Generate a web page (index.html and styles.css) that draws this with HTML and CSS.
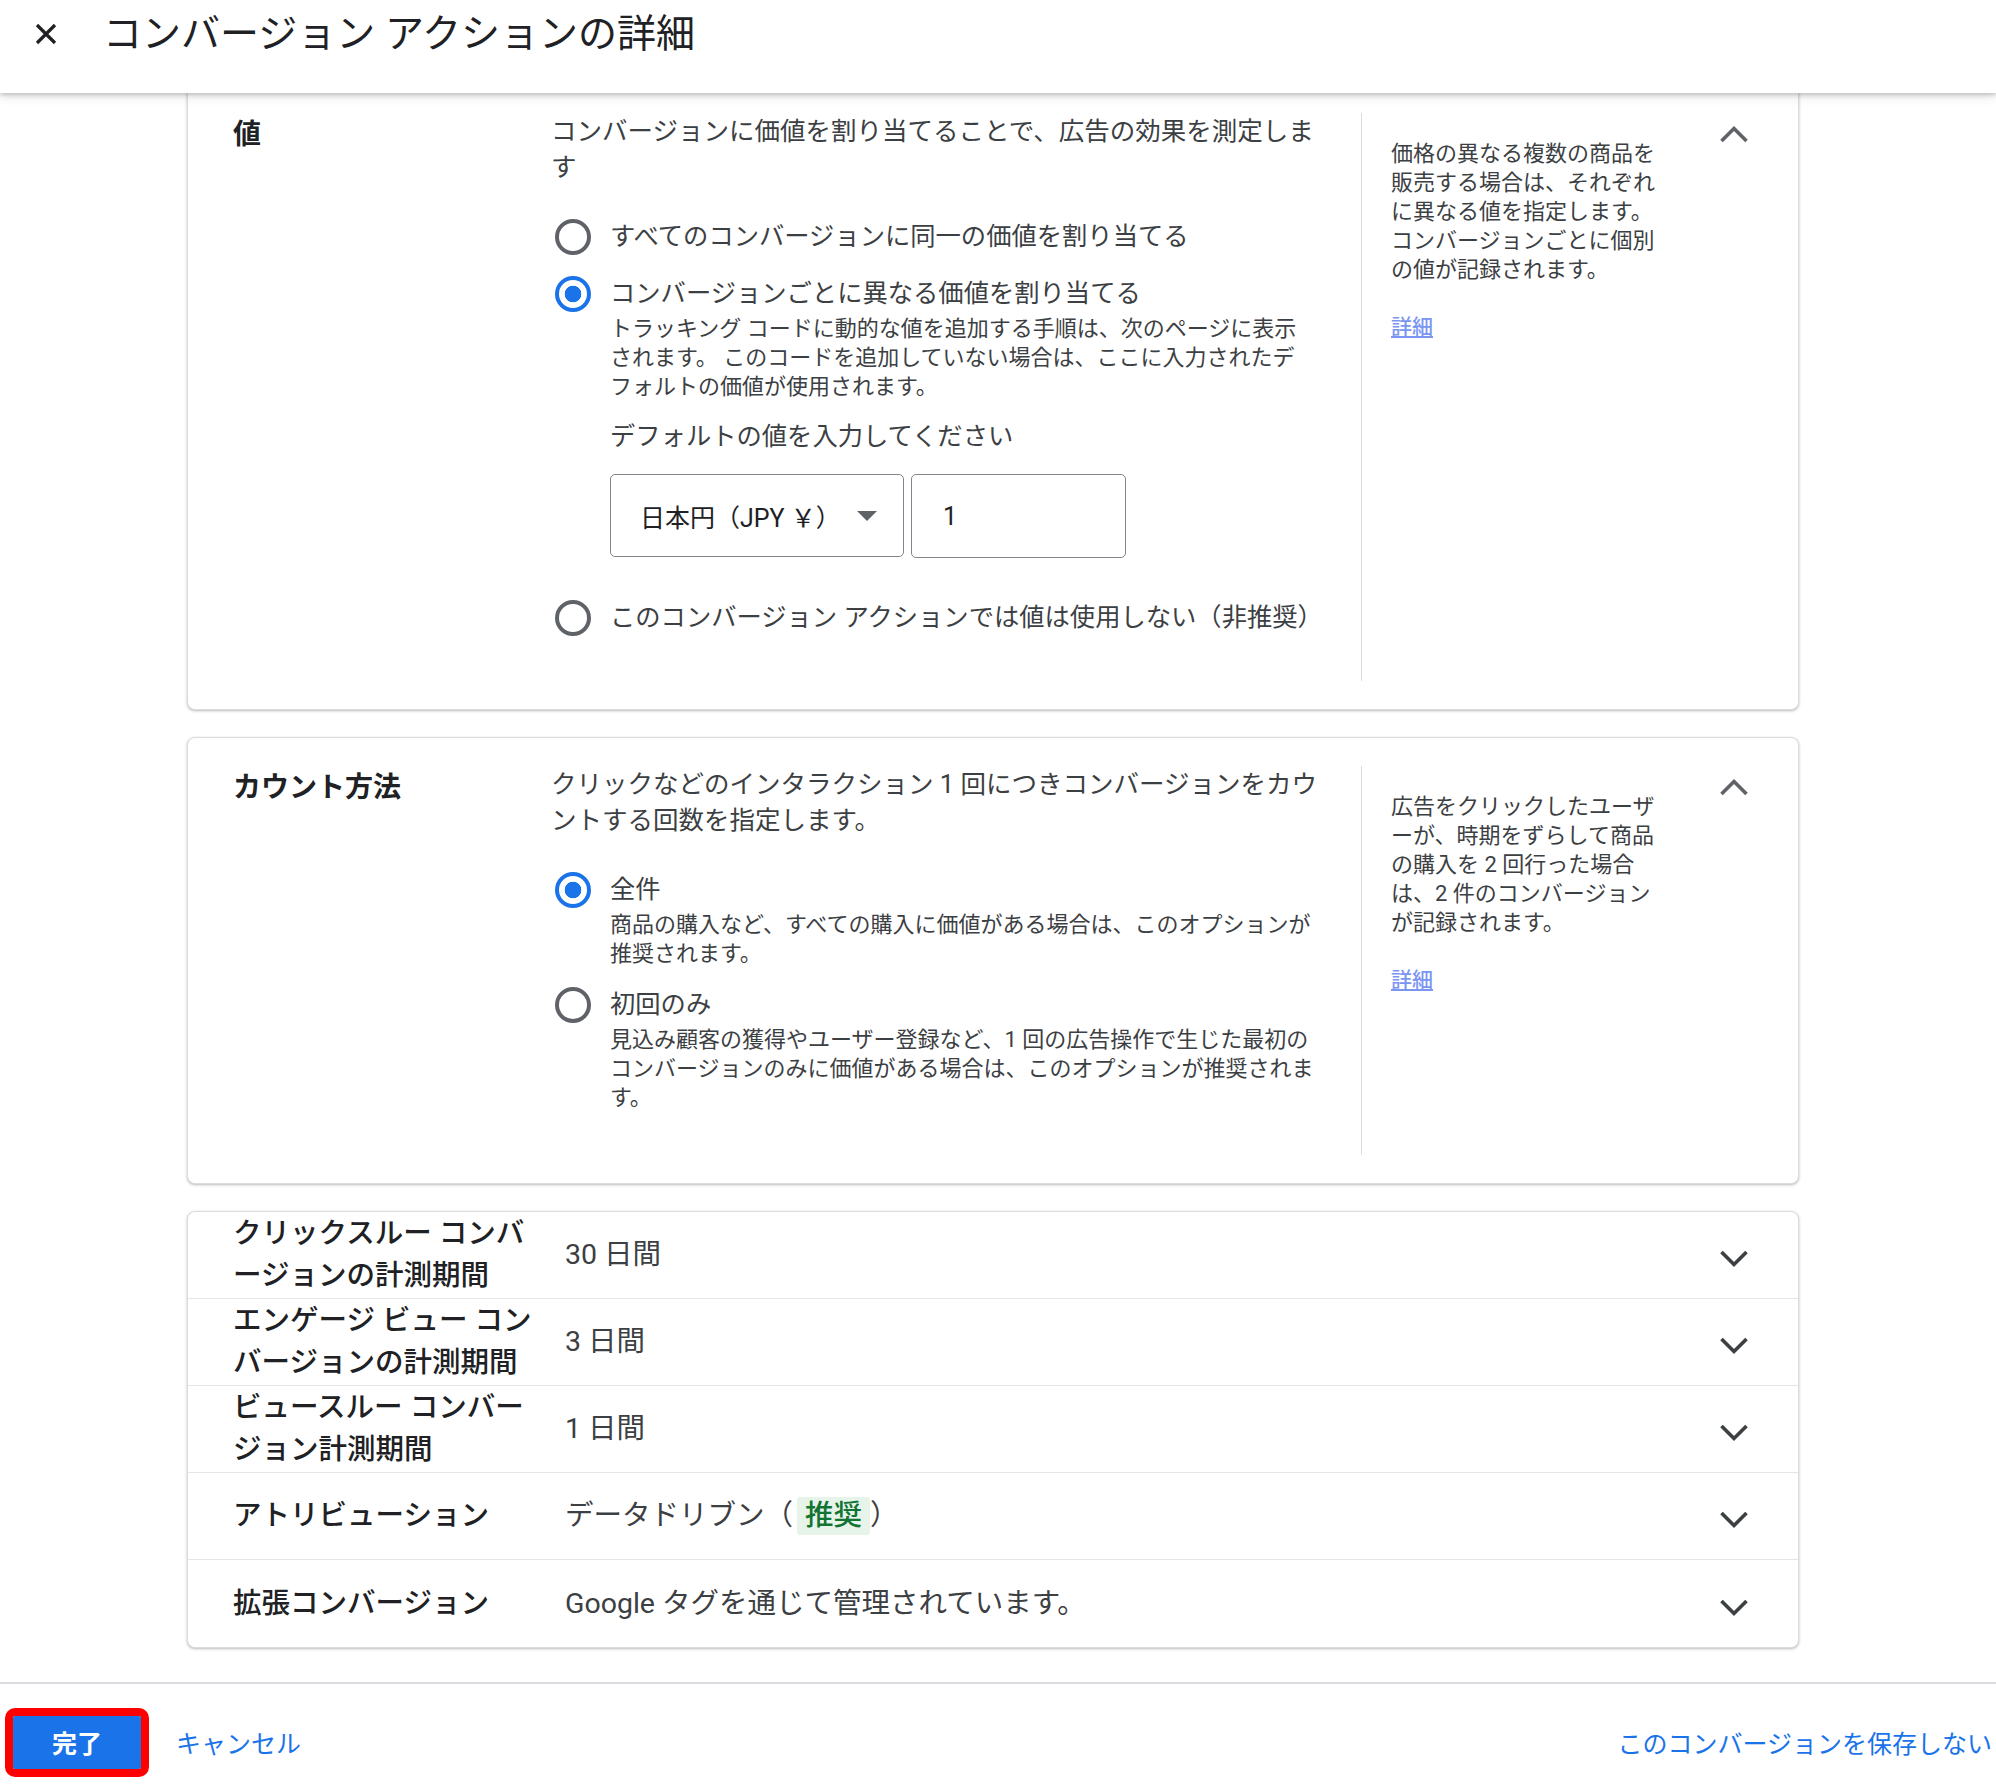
FILE: index.html
```html
<!DOCTYPE html>
<html lang="ja">
<head>
<meta charset="utf-8">
<title>コンバージョン アクションの詳細</title>
<link rel="stylesheet" href="styles.css">
</head>
<body>
<div class="page">
  <header class="topbar">
    <div class="topbar-row">
      <button class="close-btn" aria-label="閉じる">
        <svg viewBox="0 0 24 24" width="24" height="24"><path d="M3 3 L21 21 M21 3 L3 21" stroke="#202124" stroke-width="3.2" fill="none"/></svg>
      </button>
      <h1 class="title">コンバージョン アクションの詳細</h1>
    </div>
  </header>

  <main class="content">
    <section class="card card-first">
      <div class="card-label">値</div>
      <div class="card-main">
        <p class="card-desc">コンバージョンに価値を割り当てることで、広告の効果を測定します</p>
        <div class="option">
          <input type="radio" class="radio" name="value">
          <span class="option-text">すべてのコンバージョンに同一の価値を割り当てる</span>
        </div>
        <div class="option option-tight">
          <input type="radio" class="radio" name="value" checked>
          <span class="option-text">コンバージョンごとに異なる価値を割り当てる</span>
        </div>
        <p class="option-help">トラッキング コードに動的な値を追加する手順は、次のページに表示されます。 このコードを追加していない場合は、ここに入力されたデフォルトの価値が使用されます。</p>
        <p class="field-caption">デフォルトの値を入力してください</p>
        <div class="field-row">
          <div class="select-box">
            <span class="select-text">日本円（JPY ￥）</span>
            <span class="select-arrow"></span>
          </div>
          <input class="num-input" type="text" value="1">
        </div>
        <div class="option option-last">
          <input type="radio" class="radio" name="value">
          <span class="option-text">このコンバージョン アクションでは値は使用しない（非推奨）</span>
        </div>
      </div>
      <aside class="card-help">
        <p class="help-text">価格の異なる複数の商品を販売する場合は、それぞれに異なる値を指定します。コンバージョンごとに個別の値が記録されます。</p>
        <a class="help-link" href="#">詳細</a>
      </aside>
      <div class="card-toggle">
        <svg class="chev chev-up" viewBox="0 0 34 22" width="34" height="22"><polyline points="4.5,18 17,5.5 29.5,18" fill="none" stroke="#5f6368" stroke-width="3.6"/></svg>
      </div>
    </section>

    <section class="card">
      <div class="card-label">カウント方法</div>
      <div class="card-main">
        <p class="card-desc">クリックなどのインタラクション 1 回につきコンバージョンをカウントする回数を指定します。</p>
        <div class="option option-tight">
          <input type="radio" class="radio" name="count" checked>
          <span class="option-text">全件</span>
        </div>
        <p class="option-help">商品の購入など、すべての購入に価値がある場合は、このオプションが推奨されます。</p>
        <div class="option option-tight option-second">
          <input type="radio" class="radio" name="count">
          <span class="option-text">初回のみ</span>
        </div>
        <p class="option-help option-help-last">見込み顧客の獲得やユーザー登録など、1 回の広告操作で生じた最初のコンバージョンのみに価値がある場合は、このオプションが推奨されます。</p>
      </div>
      <aside class="card-help">
        <p class="help-text">広告をクリックしたユーザーが、時期をずらして商品の購入を 2 回行った場合は、2 件のコンバージョンが記録されます。</p>
        <a class="help-link" href="#">詳細</a>
      </aside>
      <div class="card-toggle">
        <svg class="chev chev-up" viewBox="0 0 34 22" width="34" height="22"><polyline points="4.5,18 17,5.5 29.5,18" fill="none" stroke="#5f6368" stroke-width="3.6"/></svg>
      </div>
    </section>

    <section class="card list-card">
      <div class="list-row">
        <div class="row-label">クリックスルー コンバージョンの計測期間</div>
        <div class="row-value">30 日間</div>
        <svg class="chev" viewBox="0 0 34 22" width="34" height="22"><polyline points="4.5,4 17,16.5 29.5,4" fill="none" stroke="#3c4043" stroke-width="3.6"/></svg>
      </div>
      <div class="list-row">
        <div class="row-label">エンゲージ ビュー コンバージョンの計測期間</div>
        <div class="row-value">3 日間</div>
        <svg class="chev" viewBox="0 0 34 22" width="34" height="22"><polyline points="4.5,4 17,16.5 29.5,4" fill="none" stroke="#3c4043" stroke-width="3.6"/></svg>
      </div>
      <div class="list-row">
        <div class="row-label">ビュースルー コンバージョン計測期間</div>
        <div class="row-value">1 日間</div>
        <svg class="chev" viewBox="0 0 34 22" width="34" height="22"><polyline points="4.5,4 17,16.5 29.5,4" fill="none" stroke="#3c4043" stroke-width="3.6"/></svg>
      </div>
      <div class="list-row">
        <div class="row-label">アトリビューション</div>
        <div class="row-value">データドリブン（<span class="badge">推奨</span>）</div>
        <svg class="chev" viewBox="0 0 34 22" width="34" height="22"><polyline points="4.5,4 17,16.5 29.5,4" fill="none" stroke="#3c4043" stroke-width="3.6"/></svg>
      </div>
      <div class="list-row">
        <div class="row-label">拡張コンバージョン</div>
        <div class="row-value">Google タグを通じて管理されています。</div>
        <svg class="chev" viewBox="0 0 34 22" width="34" height="22"><polyline points="4.5,4 17,16.5 29.5,4" fill="none" stroke="#3c4043" stroke-width="3.6"/></svg>
      </div>
    </section>
  </main>

  <footer class="footer">
    <button class="done-btn">完了</button>
    <a class="text-link cancel-link" href="#">キャンセル</a>
    <a class="text-link discard-link" href="#">このコンバージョンを保存しない</a>
  </footer>
</div>
</body>
</html>
```

FILE: styles.css
```css
* { box-sizing: border-box; }

html, body {
  margin: 0;
  padding: 0;
  background: #ffffff;
}

body {
  font-family: Roboto, "Noto Sans CJK JP", sans-serif;
  color: #202124;
  line-break: loose;
}

p { margin: 0; }

.page {
  height: 1792px;
  display: flex;
  flex-direction: column;
  overflow: hidden;
}

/* ---------- Header ---------- */
.topbar {
  position: relative;
  z-index: 2;
  height: 93px;
  flex: none;
  background: #ffffff;
  box-shadow: 0 2px 4px rgba(60, 64, 67, 0.25), 0 4px 10px rgba(60, 64, 67, 0.12);
}

.topbar-row {
  height: 68px;
  display: flex;
  align-items: center;
  padding-left: 34px;
}

.close-btn {
  width: 24px;
  height: 24px;
  padding: 0;
  border: 0;
  background: none;
  display: flex;
}

.title {
  margin: 0 0 0 45px;
  font-size: 39px;
  font-weight: 400;
  line-height: 68px;
  color: #202124;
  white-space: nowrap;
}

/* ---------- Content ---------- */
.content {
  flex: 1;
  padding-left: 187px;
  display: flex;
  flex-direction: column;
  gap: 27px;
  overflow: hidden;
}

.card {
  width: 1612px;
  flex: none;
  border: 1px solid #dadce0;
  border-radius: 8px;
  background: #ffffff;
  box-shadow: 0 1px 2px rgba(60, 64, 67, 0.25), 0 1px 3px 1px rgba(60, 64, 67, 0.08);
  display: flex;
  padding: 28px 0 28px 45px;
}

.card-first {
  margin-top: -9px;
}

.card-label {
  width: 318px;
  flex: none;
  padding-top: 4px;
  font-size: 28px;
  font-weight: 700;
  line-height: 36px;
  color: #202124;
}

.card-main {
  width: 810px;
  flex: none;
  padding-right: 32px;
  padding-bottom: 43px;
}

.card-desc {
  font-size: 25.5px;
  line-height: 36px;
  color: #3c4043;
  margin-bottom: 32px;
}

.option {
  display: flex;
  align-items: center;
  height: 40px;
  margin-left: 4px;
  margin-bottom: 17px;
}

.option-tight { margin-bottom: 0; }
.option-second { margin-top: 17px; }
.option-last { margin-top: 40px; margin-bottom: 0; }

.radio {
  appearance: none;
  -webkit-appearance: none;
  width: 36px;
  height: 36px;
  margin: 0 19px 0 0;
  flex: none;
  border: 4px solid #5f6368;
  border-radius: 50%;
  background: #ffffff;
}

.radio:checked {
  border-color: #1a73e8;
  background: radial-gradient(circle, #1a73e8 0 8px, #ffffff 8.6px);
}

.option-text {
  font-size: 25.3px;
  line-height: 36px;
  color: #3c4043;
  white-space: nowrap;
}

.option-help {
  margin-left: 59px;
  width: 706px;
  font-size: 22px;
  line-height: 29px;
  color: #3c4043;
}

.field-caption {
  margin: 18px 0 0 59px;
  font-size: 25.3px;
  line-height: 36px;
  color: #3c4043;
}

.field-row {
  display: flex;
  gap: 7px;
  margin: 19px 0 0 59px;
}

.select-box {
  width: 294px;
  height: 83px;
  border: 1.5px solid #80868b;
  border-radius: 5px;
  display: flex;
  align-items: center;
  justify-content: space-between;
  padding: 0 26px 0 29px;
}

.select-text {
  font-size: 25px;
  color: #202124;
  white-space: nowrap;
}

.select-arrow {
  width: 0;
  height: 0;
  border-left: 10px solid transparent;
  border-right: 10px solid transparent;
  border-top: 10px solid #5f6368;
}

.num-input {
  width: 215px;
  height: 84px;
  border: 1.5px solid #80868b;
  border-radius: 5px;
  padding: 0 0 0 31px;
  font-family: Roboto, "Noto Sans CJK JP", sans-serif;
  font-size: 25px;
  color: #202124;
  background: #ffffff;
}

.card-help {
  width: 300px;
  flex: none;
  border-left: 1px solid #dadce0;
  padding: 26px 0 0 29px;
}

.help-text {
  width: 270px;
  font-size: 22px;
  line-height: 29px;
  color: #3c4043;
}

.help-link {
  display: inline-block;
  margin-top: 31px;
  font-size: 21px;
  line-height: 24px;
  font-weight: 500;
  color: #7a96f2;
  text-decoration: underline;
}

.card-toggle {
  flex: 1;
  display: flex;
  justify-content: flex-end;
  align-items: flex-start;
  padding-right: 47px;
  padding-top: 10px;
}

.chev { flex: none; display: block; }

/* ---------- Collapsed list card ---------- */
.list-card {
  display: block;
  padding: 0;
}

.list-row {
  height: 87px;
  display: flex;
  align-items: center;
  padding: 0 47px 0 45px;
  border-bottom: 1px solid #e3e5e8;
}

.list-row:last-child { border-bottom: 0; }

.row-label {
  width: 305px;
  margin-right: 27px;
  flex: none;
  font-size: 28.5px;
  font-weight: 500;
  line-height: 42px;
  color: #202124;
}

.row-value {
  flex: 1;
  font-size: 28.5px;
  line-height: 42px;
  color: #3c4043;
  white-space: nowrap;
}

.list-row .chev { margin-top: 8px; }

.badge {
  display: inline-block;
  margin-left: 4px;
  padding: 0 8px;
  line-height: 38px;
  background: #e6f4ea;
  color: #137333;
  font-weight: 500;
  border-radius: 3px;
}

/* ---------- Footer ---------- */
.footer {
  flex: none;
  height: 110px;
  border-top: 2px solid #dadce0;
  display: flex;
  align-items: center;
  padding: 8px 4px 0 13px;
}

.done-btn {
  width: 128px;
  height: 53px;
  border: 0;
  border-radius: 2px;
  background: #1a73e8;
  color: #ffffff;
  font-family: Roboto, "Noto Sans CJK JP", sans-serif;
  font-size: 25px;
  font-weight: 700;
  outline: 8px solid #ff0000;
}

.text-link {
  font-size: 25px;
  color: #1a73e8;
  text-decoration: none;
  white-space: nowrap;
}

.cancel-link { margin-left: 35px; }
.discard-link { margin-left: auto; }
```
